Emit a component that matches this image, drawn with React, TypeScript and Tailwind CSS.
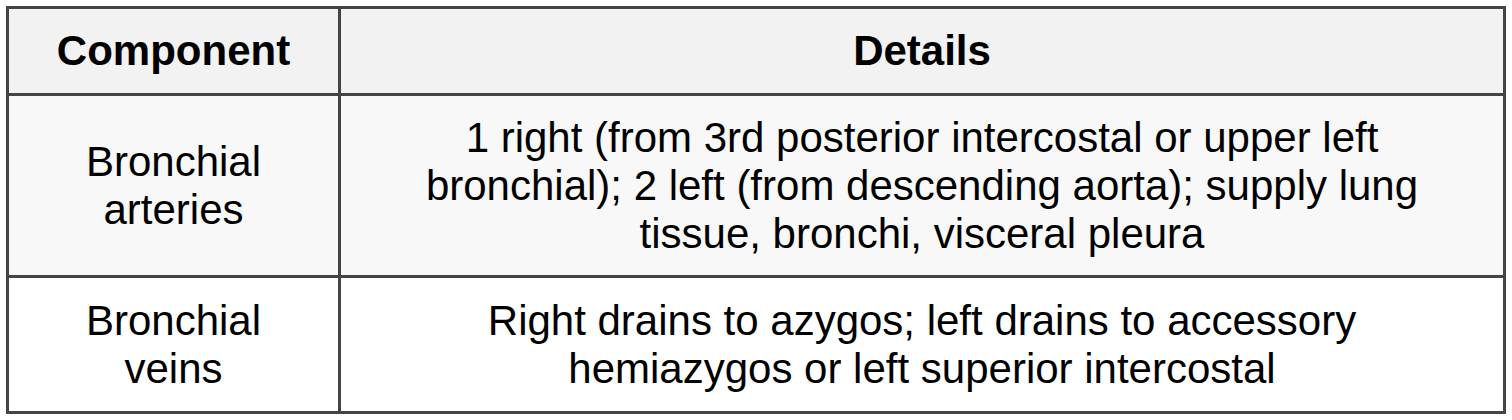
import React from 'react';

interface Row {
  component: string;
  details: string;
  height: string;
  bg: string;
}

const rows: Row[] = [
  {
    component: 'Bronchial arteries',
    details:
      '1 right (from 3rd posterior intercostal or upper left bronchial); 2 left (from descending aorta); supply lung tissue, bronchi, visceral pleura',
    height: 'h-[182px]',
    bg: 'bg-[#f8f8f8]',
  },
  {
    component: 'Bronchial veins',
    details: 'Right drains to azygos; left drains to accessory hemiazygos or left superior intercostal',
    height: 'h-[136px]',
    bg: 'bg-white',
  },
];

const App: React.FC = () => {
  return (
    <div className="min-h-screen bg-white p-[6px] font-['Liberation_Sans',Arial,sans-serif] text-black">
      <table className="w-[1500px] table-fixed border-separate border-spacing-0 border-[3px] border-[#444444] text-[42px] leading-[48px]">
        <colgroup>
          <col className="w-[329px]" />
          <col className="w-[1165px]" />
        </colgroup>
        <thead>
          <tr className="bg-[#f2f2f2]">
            <th className="h-[84px] px-6 py-0 text-center align-middle font-bold">Component</th>
            <th className="h-[84px] border-l-[3px] border-[#444444] px-12 py-0 text-center align-middle font-bold">
              Details
            </th>
          </tr>
        </thead>
        <tbody>
          {rows.map((row) => (
            <tr key={row.component} className={row.bg}>
              <td className={`${row.height} border-t-[3px] border-[#444444] px-6 py-0 text-center align-middle`}>
                {row.component}
              </td>
              <td
                className={`${row.height} border-t-[3px] border-l-[3px] border-[#444444] px-12 py-0 text-center align-middle`}
              >
                {row.details}
              </td>
            </tr>
          ))}
        </tbody>
      </table>
    </div>
  );
};

export default App;
